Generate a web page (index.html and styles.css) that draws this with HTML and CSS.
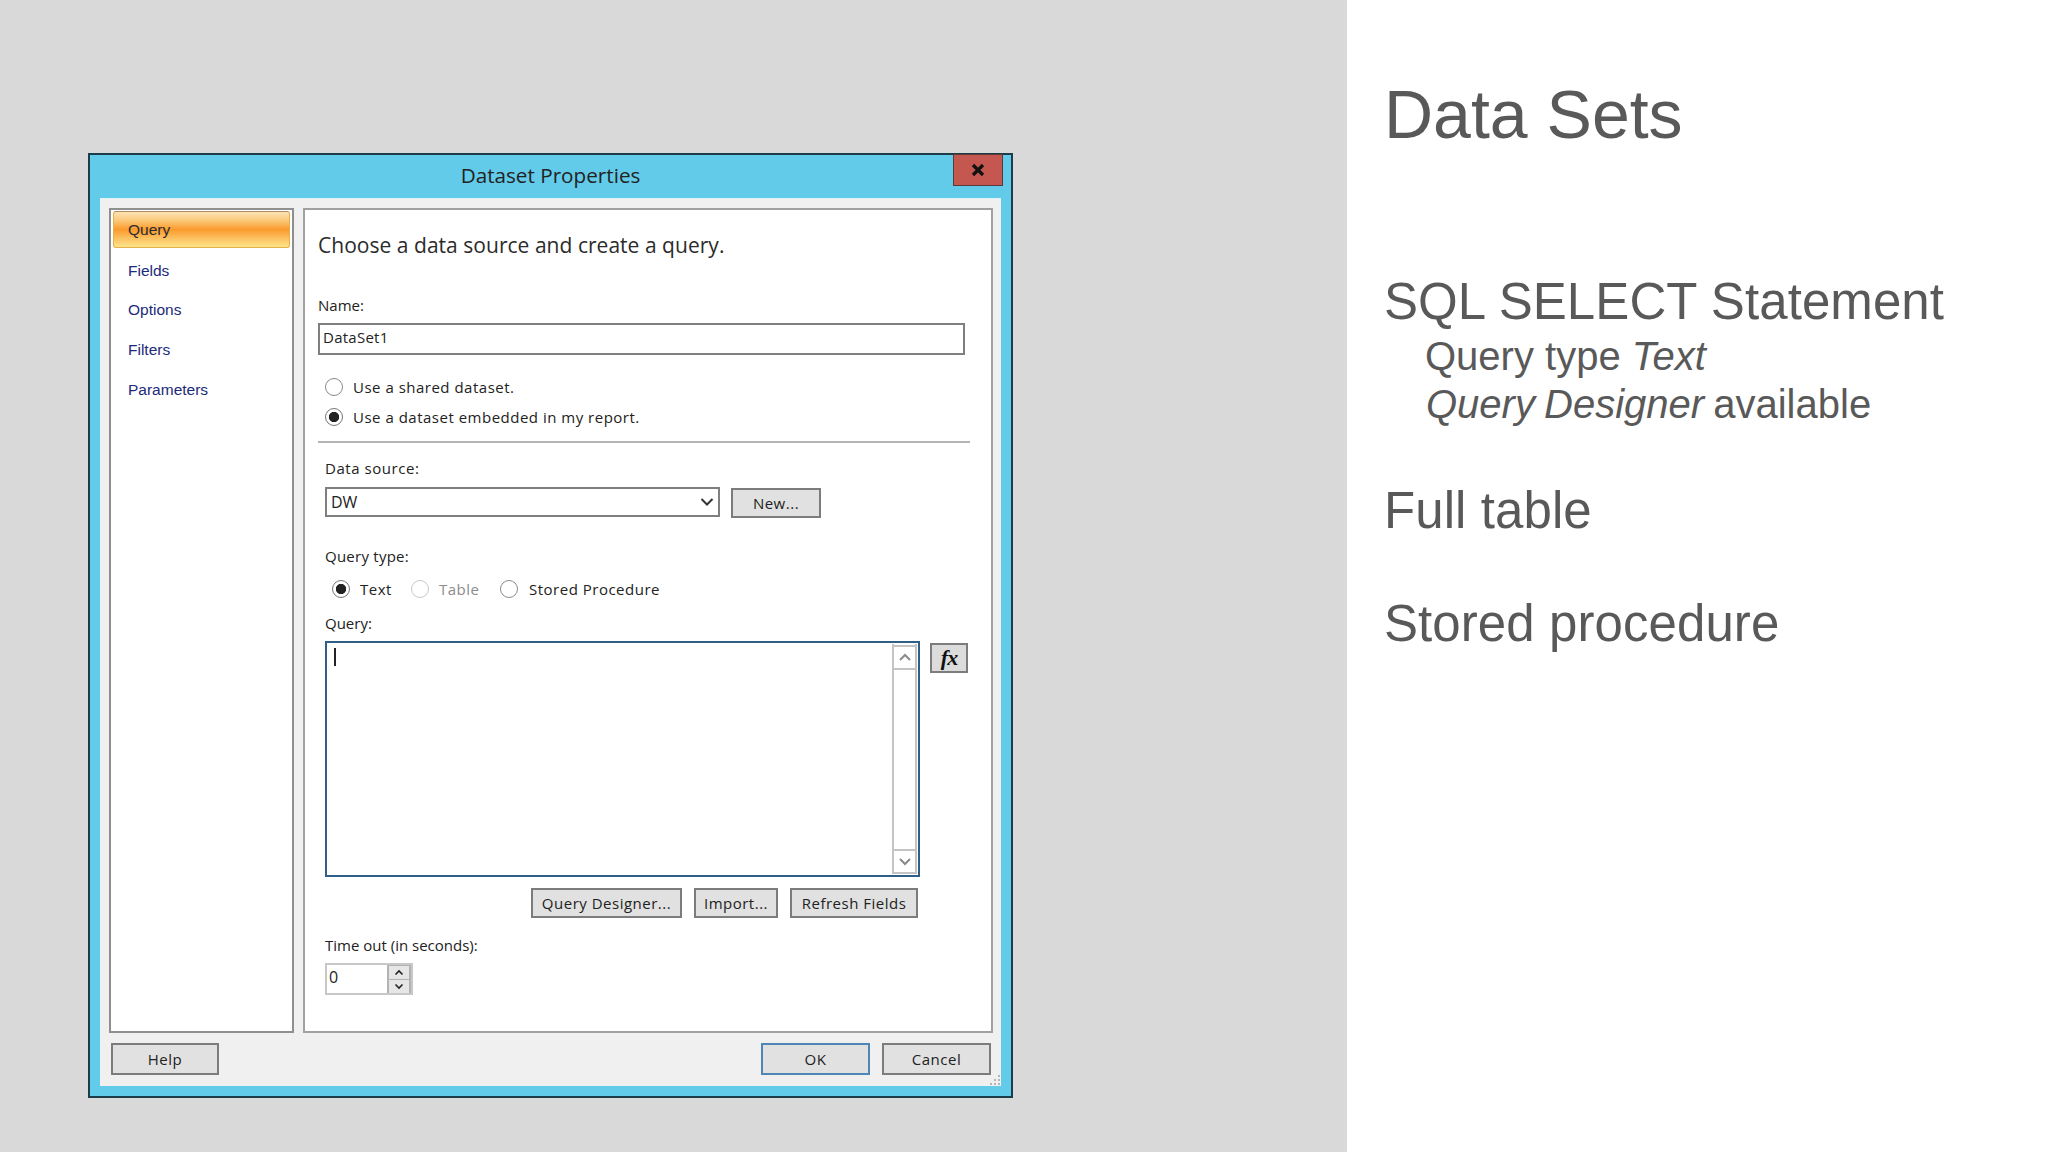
FILE: index.html
```html
<!DOCTYPE html>
<html lang="en">
<head>
<meta charset="utf-8">
<title>Data Sets</title>
<link rel="stylesheet" href="styles.css">
</head>
<body>
<div class="slide">
  <section class="stage">
    <div class="dialog">
      <header class="titlebar">
        <span class="title">Dataset Properties</span>
        <div class="close"><svg width="16" height="14" viewBox="0 0 16 14"><path d="M3 2l10 10M13 2L3 12" fill="none" stroke="#111" stroke-width="3.2"/></svg></div>
      </header>
      <div class="client">
        <div class="panes">
          <nav class="sidebar">
            <div class="nav-item nav-active">Query</div>
            <div class="nav-item">Fields</div>
            <div class="nav-item">Options</div>
            <div class="nav-item">Filters</div>
            <div class="nav-item">Parameters</div>
          </nav>
          <main class="content">
            <h2 class="heading">Choose a data source and create a query.</h2>
            <div class="label label-name">Name:</div>
            <div class="field field-name">DataSet1</div>
            <div class="radio-row first"><span class="radio"></span><span>Use a shared dataset.</span></div>
            <div class="radio-row second"><span class="radio on"></span><span>Use a dataset embedded in my report.</span></div>
            <div class="separator"></div>
            <div class="indent">
              <div class="label label-ds">Data source:</div>
              <div class="combo-row">
                <div class="combo"><span>DW</span>
                  <svg width="14" height="10" viewBox="0 0 14 10"><path d="M1.5 2l5.5 5.5L12.500 2" fill="none" stroke="#333" stroke-width="2"/></svg>
                </div>
                <div class="btn btn-new">New...</div>
              </div>
              <div class="label label-qt">Query type:</div>
              <div class="type-row">
                <span class="radio on"></span><span class="type-text type-t">Text</span>
                <span class="radio off"></span><span class="type-text type-d">Table</span>
                <span class="radio"></span><span class="type-text type-s">Stored Procedure</span>
              </div>
              <div class="label label-q">Query:</div>
              <div class="query-row">
                <div class="query">
                  <div class="caret-area"><span class="caret"></span></div>
                  <div class="scroll">
                    <div class="scroll-btn"><svg width="14" height="9" viewBox="0 0 14 9"><path d="M2 7l5-5 5 5" fill="none" stroke="#8a8a8a" stroke-width="2"/></svg></div>
                    <div class="scroll-track"></div>
                    <div class="scroll-btn down"><svg width="14" height="9" viewBox="0 0 14 9"><path d="M2 2l5 5 5-5" fill="none" stroke="#8a8a8a" stroke-width="2"/></svg></div>
                  </div>
                </div>
                <div class="btn fx">fx</div>
              </div>
              <div class="action-row">
                <div class="btn btn-designer">Query Designer...</div>
                <div class="btn btn-import">Import...</div>
                <div class="btn btn-refresh">Refresh Fields</div>
              </div>
              <div class="label label-time">Time out (in seconds):</div>
              <div class="spinner">
                <span class="spin-value">0</span>
                <div class="spin-btns">
                  <div class="spin-btn"><svg width="10" height="7" viewBox="0 0 10 7"><path d="M1.500 5.500L5 2l3.500 3.500" fill="none" stroke="#222" stroke-width="1.600"/></svg></div>
                  <div class="spin-btn"><svg width="10" height="7" viewBox="0 0 10 7"><path d="M1.500 1.500L5 5l3.500-3.500" fill="none" stroke="#222" stroke-width="1.600"/></svg></div>
                </div>
              </div>
            </div>
          </main>
        </div>
        <footer class="footer">
          <div class="btn btn-foot btn-help">Help</div>
          <div class="foot-right">
            <div class="btn btn-foot btn-ok">OK</div>
            <div class="btn btn-foot">Cancel</div>
          </div>
        </footer>
        <svg class="grip" width="12" height="12" viewBox="0 0 12 12"><g fill="#b5b5b5"><rect x="9" y="1" width="2" height="2"/><rect x="5" y="5" width="2" height="2"/><rect x="9" y="5" width="2" height="2"/><rect x="1" y="9" width="2" height="2"/><rect x="5" y="9" width="2" height="2"/><rect x="9" y="9" width="2" height="2"/></g></svg>
      </div>
    </div>
  </section>
  <aside class="notes">
    <h1 class="notes-title">Data Sets</h1>
    <p class="note-main note-sql">SQL SELECT Statement</p>
    <p class="note-sub">Query type <em>Text</em></p>
    <p class="note-sub note-sub2"><em>Query Designer</em> available</p>
    <p class="note-main note-full">Full table</p>
    <p class="note-main note-proc">Stored procedure</p>
  </aside>
</div>
</body>
</html>
```

FILE: styles.css
```css
* { box-sizing: border-box; }
html, body { margin: 0; padding: 0; }
body { width: 2048px; height: 1152px; overflow: hidden; font-family: "Open Sans", "Liberation Sans", sans-serif; background: #fff; }
p, h1, h2 { margin: 0; font-weight: 400; }

.slide { display: flex; width: 2048px; height: 1152px; }
.stage { width: 1347px; height: 1152px; background: #d9d9d9; padding: 153px 0 0 88px; flex: none; }
.notes { flex: 1; padding: 0 0 0 37px; color: #595959; font-family: "Liberation Sans", Arial, sans-serif; }

.notes-title { font-size: 68px; line-height: 80px; margin-top: 74px; }
.note-main { font-size: 51px; line-height: 60px; letter-spacing: .08px; }
.note-sql { margin-top: 118px; }
.note-sub { font-size: 40px; line-height: 48px; margin-left: 41px; }
.note-sub2 { margin-left: 42px; margin-top: 0; word-spacing: -2px; }
.note-full { margin-top: 53px; }
.note-proc { margin-top: 53px; }

.dialog { width: 925px; height: 945px; border: 2px solid #1d3c4a; background: #62cbea; padding: 0 10px 10px; display: flex; flex-direction: column; }
.titlebar { height: 43px; position: relative; display: flex; align-items: center; justify-content: center; flex: none; }
.title { font-size: 20.700px; color: #222; position: relative; top: -2px; }
.close { position: absolute; right: -2px; top: -1px; width: 50px; height: 32px; background: #c4574f; border: 1px solid #5d3a3a; display: flex; align-items: center; justify-content: center; }

.client { flex: 1; background: #f0f0f0; padding: 9px 8px 0 9px; position: relative; display: flex; flex-direction: column; border-top: 1px solid #dff2f8; }
.panes { display: flex; gap: 9px; height: 825px; flex: none; }
.sidebar { width: 185px; background: #fff; border: 2px solid #8f8f8f; padding: 1px 2px 0; flex: none; }
.nav-item { height: 39.700px; display: flex; align-items: center; padding-left: 15px; font-family: "Liberation Sans", sans-serif; font-size: 15.500px; color: #1c2a7a; }
.nav-active { height: 37px; margin-bottom: 2.700px; padding-left: 14px; color: #2a2a30; border-radius: 3px; border: 1px solid #e5b04a; border-top-color: #b08a60; background: linear-gradient(#fde3b4 0%, #fbc878 25%, #fb9a2c 50%, #fcc060 75%, #fde58a 100%); }

.content { flex: 1; background: #fff; border: 2px solid #a0a0a0; padding: 0 0 0 13px; color: #222; font-size: 15px; }
.heading { font-size: 21px; line-height: 30px; margin-top: 20px; color: #2b2b2b; white-space: nowrap; letter-spacing: .03px; }
.label { height: 20px; line-height: 18px; font-size: 15px; color: #222; }
.label-name { margin-top: 36px; }
.field { height: 32px; border: 2px solid #7f7f7f; background: #fff; }
.field-name { width: 647px; margin-top: 7px; padding-left: 3px; line-height: 25px; font-size: 15px; letter-spacing: .25px; }
.radio-row { height: 22px; display: flex; align-items: center; gap: 10px; margin-left: 7px; font-size: 15px; letter-spacing: .5px; }
.first { margin-top: 21px; }
.second { margin-top: 8px; }
.radio { width: 18px; height: 18px; border: 1.500px solid #8a8a8a; border-radius: 50%; background: #fff; flex: none; display: inline-block; }
.radio.on { border-color: #777; background: radial-gradient(circle, #222 0 4.800px, #fff 5.500px); }
.radio.off { border-color: #c9c9c9; }
.separator { width: 652px; height: 2px; background: #b4b4b4; margin-top: 13px; }
.indent { padding-left: 7px; }
.label-ds { margin-top: 16px; letter-spacing: .55px; }
.combo-row { display: flex; gap: 11px; margin-top: 8px; align-items: flex-start; }
.combo { width: 395px; height: 30px; border: 2px solid #7f7f7f; display: flex; align-items: center; justify-content: space-between; padding: 0 4px 0 4px; font-size: 16px; }
.btn { background: #e1e1e1; border: 2px solid #7c7c7c; display: flex; align-items: center; justify-content: center; color: #222; font-size: 15px; letter-spacing: .5px; flex: none; }
.btn-new { width: 90px; height: 30px; margin-top: 1px; }
.label-qt { margin-top: 29px; letter-spacing: .25px; }
.type-row { display: flex; align-items: center; height: 22px; margin-top: 11px; padding-left: 7px; letter-spacing: .5px; }
.type-text { margin-left: 10px; }
.type-t { width: 51px; }
.type-d { width: 60.500px; color: #8c8c8c; }
.type-s { margin-left: 11.500px; }
.label-q { margin-top: 14px; }
.query-row { display: flex; gap: 10px; margin-top: 7px; align-items: flex-start; }
.query { width: 595px; height: 236px; border: 2px solid #2f5f86; display: flex; padding: 1px; }
.caret-area { flex: 1; padding: 4px 0 0 6px; }
.caret { display: block; width: 2px; height: 18px; background: #222; }
.scroll { width: 25px; border: 1.500px solid #c4c4c4; border-width: 0 2px; display: flex; flex-direction: column; background: #fff; padding-top: 1px; }
.scroll-btn { height: 25px; display: flex; align-items: center; justify-content: center; border-top: 2px solid #c4c4c4; border-bottom: 2px solid #c4c4c4; }
.scroll-track { flex: 1; }
.fx { width: 38px; height: 30px; margin-top: 2px; background: #dcdcdc; font-family: "Liberation Serif", serif; font-style: italic; font-weight: 700; font-size: 22px; color: #111; letter-spacing: -1px; }
.action-row { display: flex; margin-top: 11px; padding-left: 206px; gap: 12px; }
.action-row .btn { height: 30px; }
.btn-designer { width: 151px; }
.btn-import { width: 84px; }
.btn-refresh { width: 128px; }
.label-time { margin-top: 18px; letter-spacing: 0; }
.spinner { width: 88px; height: 32px; margin-top: 7px; border: 2px solid #c8c8c8; display: flex; justify-content: space-between; }
.spin-value { padding-left: 2px; line-height: 24px; font-size: 16px; }
.spin-btns { width: 24px; background: #b3b3b3; display: flex; flex-direction: column; justify-content: space-between; padding: 1px 2px 0; }
.spin-btn { height: 13px; background: #e6e6e6; display: flex; align-items: center; justify-content: center; }

.footer { display: flex; justify-content: space-between; margin-top: 10px; padding: 0 2px 0 2px; }
.btn-foot { width: 109px; height: 32px; }
.btn-help { width: 108px; }
.foot-right { display: flex; gap: 12px; }
.btn-ok { border-color: #4f86b5; }
.grip { position: absolute; right: 0; bottom: 0; }
```
